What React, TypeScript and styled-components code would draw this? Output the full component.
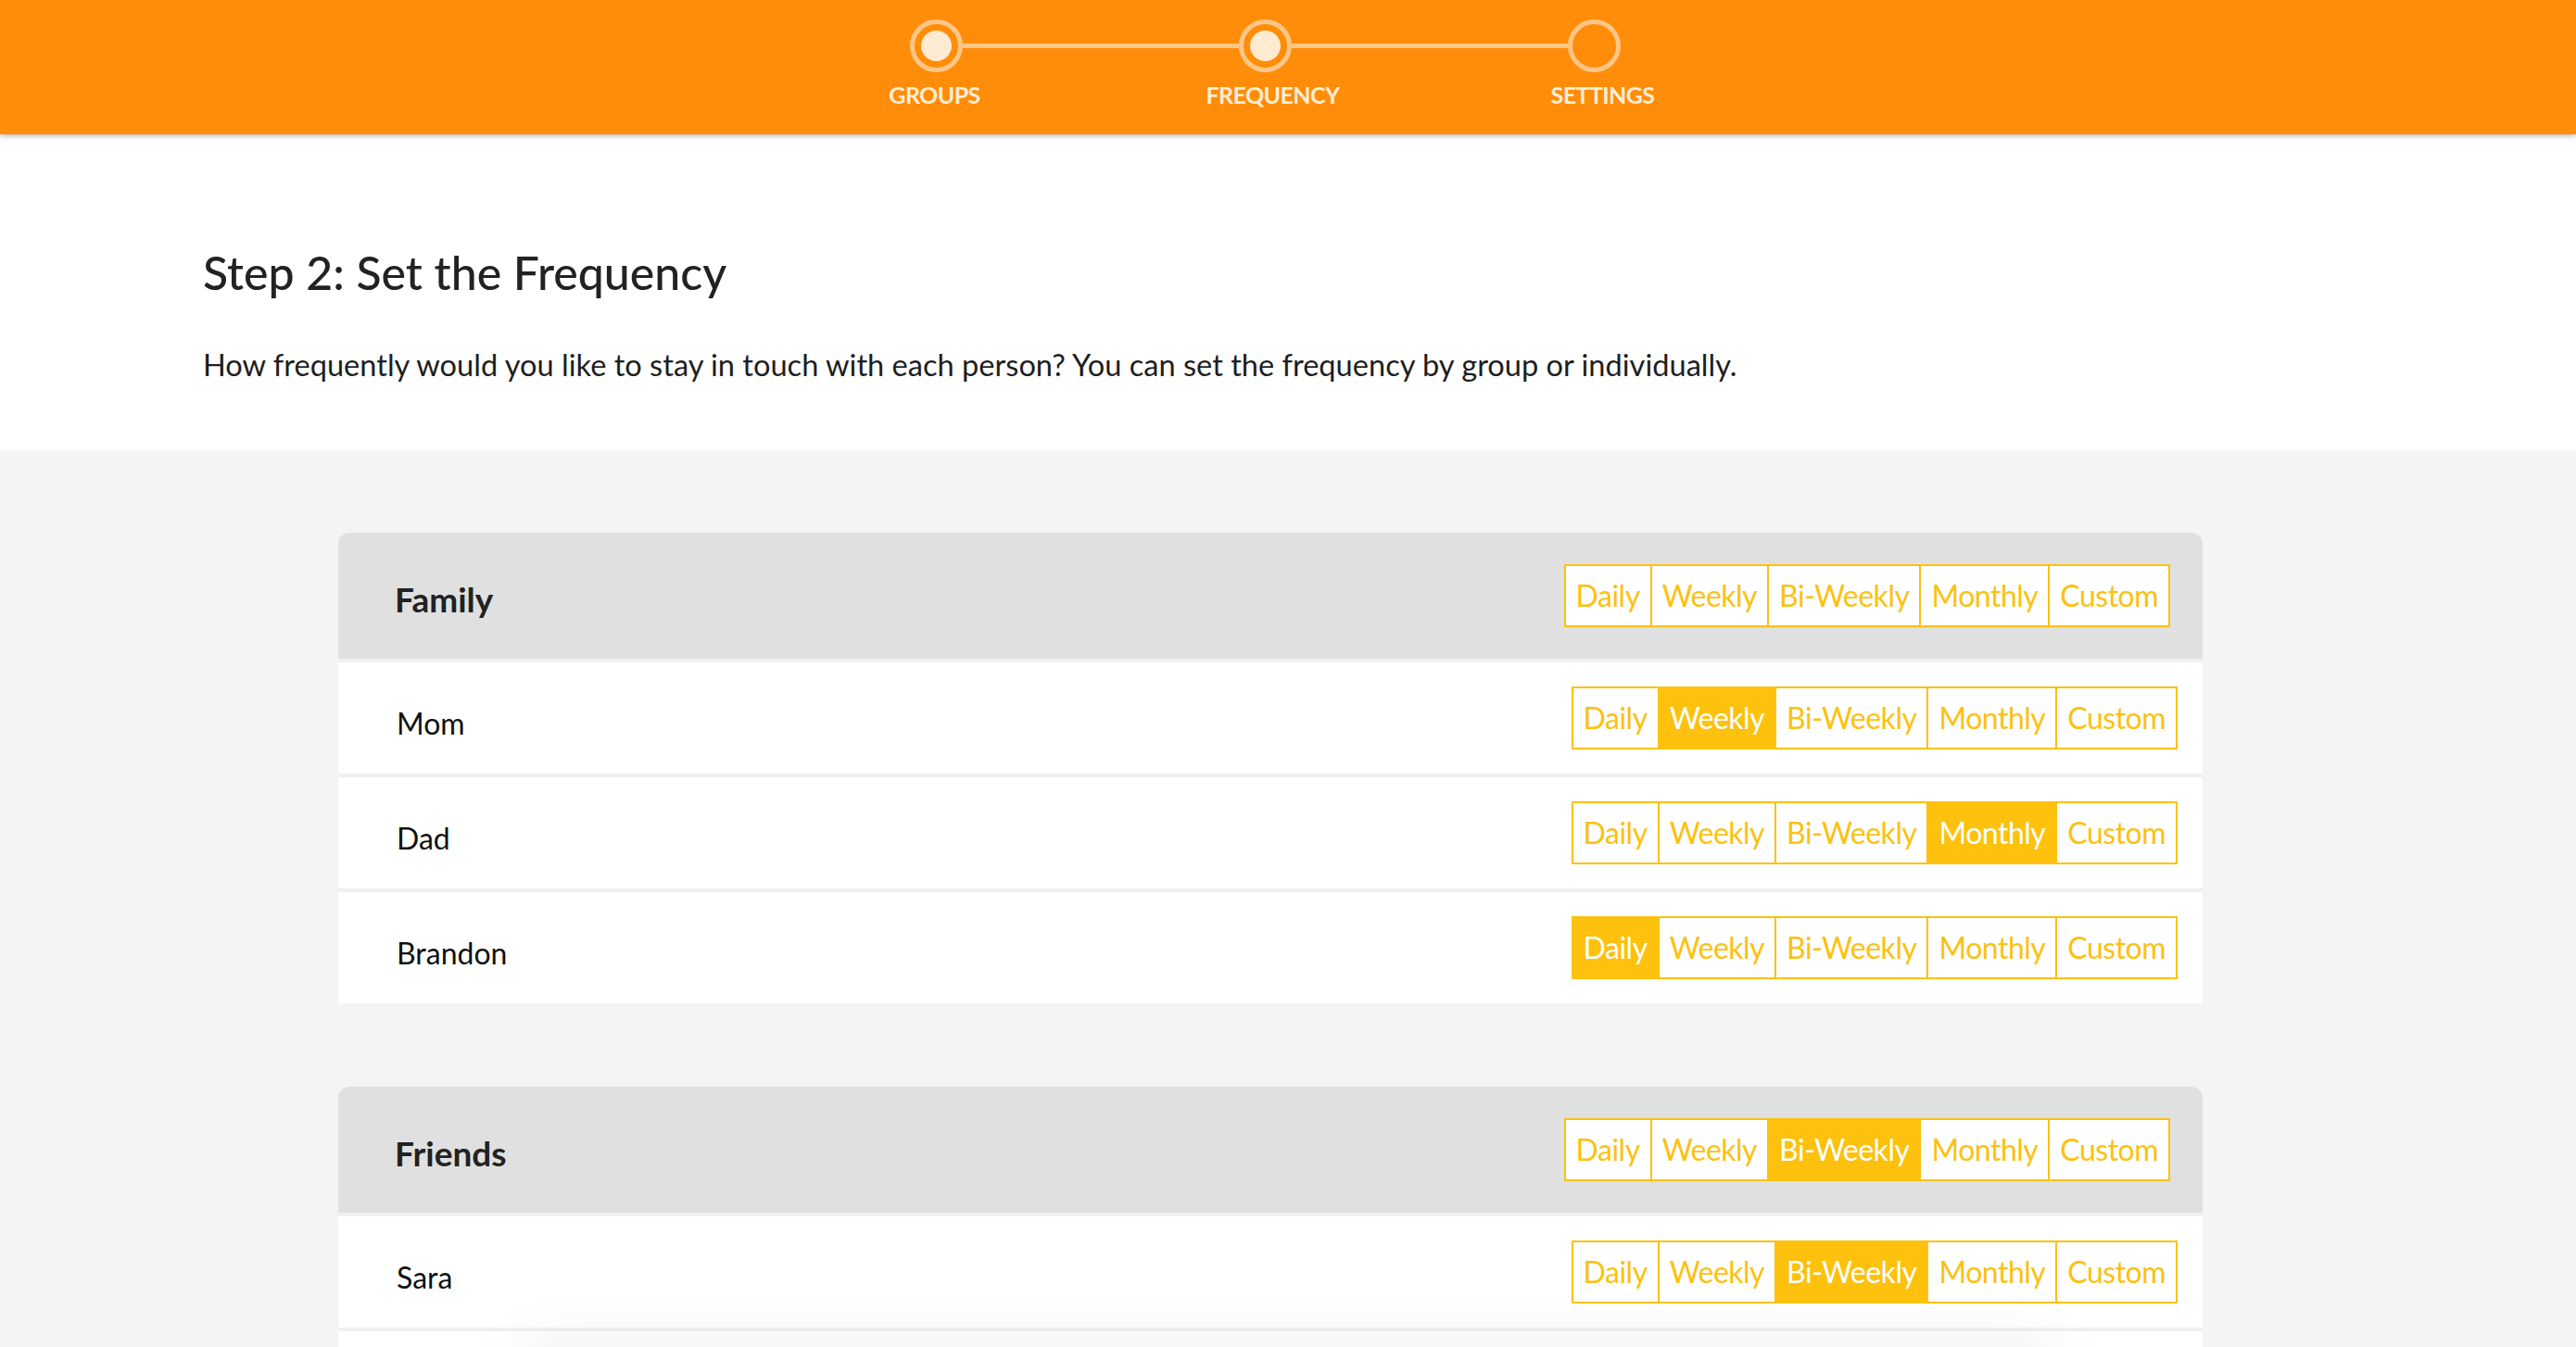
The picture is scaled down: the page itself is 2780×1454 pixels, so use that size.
import React from "react";
import styled, { createGlobalStyle } from "styled-components";

const ORANGE = "#FF8D0A";
const YELLOW = "#FDC10E";
const FONT = `Lato, "Open Sans", "Liberation Sans", sans-serif`;

const GlobalStyle = createGlobalStyle`
  html, body { margin: 0; padding: 0; }
  body {
    background: #F4F4F4;
    font-family: ${FONT};
    color: #222;
    overflow: hidden;
  }
  * { box-sizing: border-box; }
`;

const TopBar = styled.header`
  position: relative;
  z-index: 2;
  height: 145px;
  background: ${ORANGE};
  box-shadow: 0 2px 5px rgba(0, 0, 0, 0.28);
  display: flex;
  justify-content: center;
  padding: 21px 49px 0 0;
`;

const Stepper = styled.div`
  display: flex;
  align-items: flex-start;
`;

const Step = styled.div`
  width: 57px;
  display: flex;
  flex-direction: column;
  align-items: center;
`;

const Ring = styled.div`
  width: 57px;
  height: 57px;
  border-radius: 50%;
  border: 5px solid rgba(255, 255, 255, 0.5);
  display: flex;
  align-items: center;
  justify-content: center;
`;

const Dot = styled.div`
  width: 33px;
  height: 33px;
  border-radius: 50%;
  background: #FFEBD2;
`;

const StepLabel = styled.div<{ $shift?: number }>`
  margin-top: 12px;
  font-size: 25px;
  line-height: 25px;
  font-weight: 700;
  letter-spacing: -0.6px;
  color: #FFEDD6;
  white-space: nowrap;
  text-transform: uppercase;
  transform: translateX(${(p) => p.$shift ?? 0}px);
`;

const Connector = styled.div`
  width: 298px;
  height: 5px;
  margin-top: 26px;
  background: rgba(255, 255, 255, 0.5);
`;

const Intro = styled.section`
  background: #fff;
  padding: 119px 0 72px 219px;
`;

const Title = styled.h1`
  margin: 0;
  font-size: 50px;
  line-height: 60px;
  font-weight: 500;
  color: #222;
`;

const Lead = styled.p`
  margin: 50px 0 0;
  font-size: 32.6px;
  line-height: 40px;
  font-weight: 400;
  color: #1e1e1e;
`;

const Groups = styled.main`
  display: flex;
  flex-direction: column;
  gap: 90px;
  padding: 89px 403px 0 365px;
`;

const Card = styled.section`
  display: flex;
  flex-direction: column;
  border-radius: 12px 12px 0 0;
  overflow: hidden;
`;

const GroupHeader = styled.div`
  height: 136px;
  background: #E0E0E0;
  display: flex;
  align-items: center;
  justify-content: space-between;
  padding: 0 35px 0 61px;
`;

const GroupName = styled.h2`
  margin: 0;
  padding-top: 6px;
  font-size: 37px;
  line-height: 37px;
  font-weight: 700;
  color: #222;
`;

const PersonRow = styled.div`
  height: 124px;
  background: #fff;
  border-top: 4px solid #F0F0F0;
  display: flex;
  align-items: center;
  justify-content: space-between;
  padding: 0 27px 0 63px;
`;

const PersonName = styled.div`
  padding-top: 12px;
  font-size: 32px;
  line-height: 32px;
  color: #111;
`;

const Segmented = styled.div`
  display: flex;
  height: 68px;
  border: 2px solid ${YELLOW};
  background: #fff;
`;

const Segment = styled.button<{ $active: boolean }>`
  appearance: none;
  margin: 0;
  border: 0;
  border-left: 2px solid ${YELLOW};
  &:first-child { border-left: 0; }
  padding: 0 11px;
  display: flex;
  align-items: center;
  font-family: ${FONT};
  font-size: 32px;
  letter-spacing: -0.5px;
  line-height: 1;
  font-weight: 400;
  cursor: pointer;
  background: ${(p) => (p.$active ? YELLOW : "#fff")};
  color: ${(p) => (p.$active ? "#fff" : YELLOW)};
`;

const FooterShade = styled.div`
  position: fixed;
  left: 560px;
  right: 560px;
  bottom: -70px;
  height: 70px;
  box-shadow: 0 0 70px rgba(0, 0, 0, 0.07);
  background: #fff;
  pointer-events: none;
`;

const OPTIONS = ["Daily", "Weekly", "Bi-Weekly", "Monthly", "Custom"];

function FrequencyPicker({ value }: { value?: string }) {
  return (
    <Segmented>
      {OPTIONS.map((o) => (
        <Segment key={o} $active={o === value}>
          {o}
        </Segment>
      ))}
    </Segmented>
  );
}

type Group = {
  name: string;
  value?: string;
  people: { name: string; value?: string }[];
};

const GROUPS: Group[] = [
  {
    name: "Family",
    people: [
      { name: "Mom", value: "Weekly" },
      { name: "Dad", value: "Monthly" },
      { name: "Brandon", value: "Daily" },
    ],
  },
  {
    name: "Friends",
    value: "Bi-Weekly",
    people: [
      { name: "Sara", value: "Bi-Weekly" },
      { name: "Alex", value: "Bi-Weekly" },
    ],
  },
];

const STEPS = [
  { label: "Groups", filled: true, shift: -2 },
  { label: "Frequency", filled: true, shift: 8 },
  { label: "Settings", filled: false, shift: 9 },
];

export default function App() {
  return (
    <>
      <GlobalStyle />
      <TopBar>
        <Stepper>
          {STEPS.map((s, i) => (
            <React.Fragment key={s.label}>
              {i > 0 && <Connector />}
              <Step>
                <Ring>{s.filled && <Dot />}</Ring>
                <StepLabel $shift={s.shift}>{s.label}</StepLabel>
              </Step>
            </React.Fragment>
          ))}
        </Stepper>
      </TopBar>
      <Intro>
        <Title>Step 2: Set the Frequency</Title>
        <Lead>
          How frequently would you like to stay in touch with each person? You can set the
          frequency by group or individually.
        </Lead>
      </Intro>
      <Groups>
        {GROUPS.map((g) => (
          <Card key={g.name}>
            <GroupHeader>
              <GroupName>{g.name}</GroupName>
              <FrequencyPicker value={g.value} />
            </GroupHeader>
            {g.people.map((p) => (
              <PersonRow key={p.name}>
                <PersonName>{p.name}</PersonName>
                <FrequencyPicker value={p.value} />
              </PersonRow>
            ))}
          </Card>
        ))}
      </Groups>
      <FooterShade />
    </>
  );
}
